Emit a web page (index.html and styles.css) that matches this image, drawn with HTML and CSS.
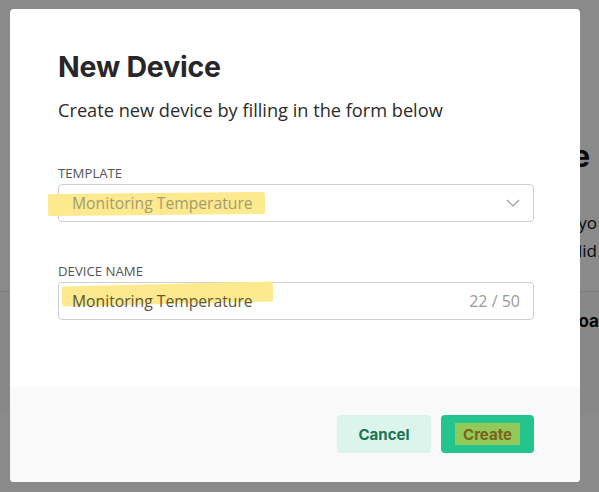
FILE: index.html
```html
<!DOCTYPE html>
<html>
<head>
<meta charset="utf-8">
<link rel="stylesheet" href="styles.css">
</head>
<body>
<div class="page">
  <h1 class="page-title">Welcome to your new Device</h1>
  <p class="page-text">Start by adding one so yo</p>
  <p class="page-text">can see that it is valid</p>
  <div class="page-row"><span class="page-link">Uploa</span></div>
</div>
<div class="backdrop"></div>
<div class="modal">
  <div class="modal-body">
    <h2 class="title">New Device</h2>
    <p class="subtitle">Create new device by filling in the form below</p>
    <div class="field">
      <label class="label">TEMPLATE</label>
      <div class="control">
        <span class="mark mark-a"></span>
        <span class="value value-muted">Monitoring Temperature</span>
        <svg class="chev" width="14" height="8" viewBox="0 0 14 8"><path d="M1 1 L7 7 L13 1" fill="none" stroke="#9a9a9a" stroke-width="1.2"/></svg>
      </div>
    </div>
    <div class="field field-2">
      <label class="label">DEVICE NAME</label>
      <div class="control">
        <span class="mark mark-b"></span>
        <span class="value value-dark">Monitoring Temperature</span>
        <span class="count">22 / 50</span>
      </div>
    </div>
  </div>
  <div class="modal-footer">
    <button class="btn btn-cancel">Cancel</button>
    <button class="btn btn-create"><span class="btn-mark">Create</span></button>
  </div>
</div>
</body>
</html>
```

FILE: styles.css
```css
* { box-sizing: border-box; }
html, body { margin: 0; padding: 0; }
body {
  width: 599px;
  height: 492px;
  overflow: hidden;
  background: #ffffff;
  position: relative;
  font-family: "Open Sans", "Noto Sans", sans-serif;
}
.page {
  width: 599px;
  overflow: hidden;
  padding-top: 136px;
  font-family: "Inter", "Liberation Sans", sans-serif;
  color: #0d0d0d;
}
.page-title {
  margin: 0;
  font-size: 30px;
  font-weight: 700;
  text-align: right;
  padding-right: 9px;
  line-height: 40px;
  white-space: nowrap;
}
.page-text {
  margin: 0;
  font-family: "Open Sans", sans-serif;
  font-size: 17px;
  line-height: 28px;
  text-align: right;
  padding-right: 2px;
  white-space: nowrap;
}
.page-text:first-of-type { margin-top: 33px; }
.page-row {
  margin-top: 26px;
  height: 120px;
  border-top: 1px solid #e6e6e6;
  background: #fbfbfb;
  padding: 19px 0 0 0;
  text-align: right;
}
.page-link { font-weight: 700; font-size: 17px; white-space: nowrap; }
.backdrop {
  position: absolute;
  inset: 0;
  background: rgba(0, 0, 0, 0.46);
}
.modal {
  position: absolute;
  left: 10px;
  top: 9px;
  width: 570px;
  height: 473px;
  background: #fff;
  border-radius: 4px;
  overflow: hidden;
  display: flex;
  flex-direction: column;
}
.modal-body {
  flex: 1;
  padding: 40px 46px 0 48px;
}
.title {
  margin: 0;
  font-family: "Inter", "Liberation Sans", sans-serif;
  font-weight: 700;
  font-size: 28.5px;
  line-height: 36px;
  color: #26262b;
  letter-spacing: -0.2px;
}
.subtitle {
  margin: 13px 0 0;
  font-size: 18.2px;
  line-height: 24px;
  color: #2b2b2b;
}
.field { margin-top: 43px; }
.field-2 { margin-top: 41px; }
.label {
  display: block;
  font-size: 13.2px;
  line-height: 16px;
  color: #545454;
  margin-bottom: 3px;
}
.control {
  position: relative;
  height: 38px;
  border: 1px solid #cfcfcf;
  border-radius: 4px;
  display: flex;
  align-items: center;
  padding: 0 13px 0 13px;
}
.value {
  position: relative;
  flex: 1;
  font-size: 15.7px;
  white-space: nowrap;
}
.value-muted { color: #a39c6e; }
.value-dark { color: #5c5737; }
.mark {
  position: absolute;
  background: #fde98e;
  border-radius: 2px;
}
.mark-a { left: -11px; top: 8px; width: 217px; height: 22px; transform: rotate(-0.6deg); }
.mark-b { left: 3px; top: 1px; width: 211px; height: 20px; transform: rotate(-1.4deg); }
.chev { position: relative; }
.count {
  position: relative;
  font-size: 16px;
  color: #9a9a9a;
}
.modal-footer {
  height: 95px;
  background: #f9f9f9;
  display: flex;
  justify-content: flex-end;
  align-items: flex-start;
  gap: 10px;
  padding: 28px 46px 0 0;
}
.btn {
  height: 38px;
  border: none;
  border-radius: 4px;
  font-family: "Inter", "Liberation Sans", sans-serif;
  font-weight: 700;
  font-size: 15px;
  padding: 0;
  display: flex;
  align-items: center;
  justify-content: center;
}
.btn-cancel {
  width: 94px;
  background: #dcf5ec;
  color: #1b7353;
}
.btn-create {
  width: 93px;
  background: #23c48e;
  color: #7b6420;
}
.btn-mark {
  background: #93c957;
  padding: 3px 8px 2px 8px;
  line-height: 17px;
}
```
